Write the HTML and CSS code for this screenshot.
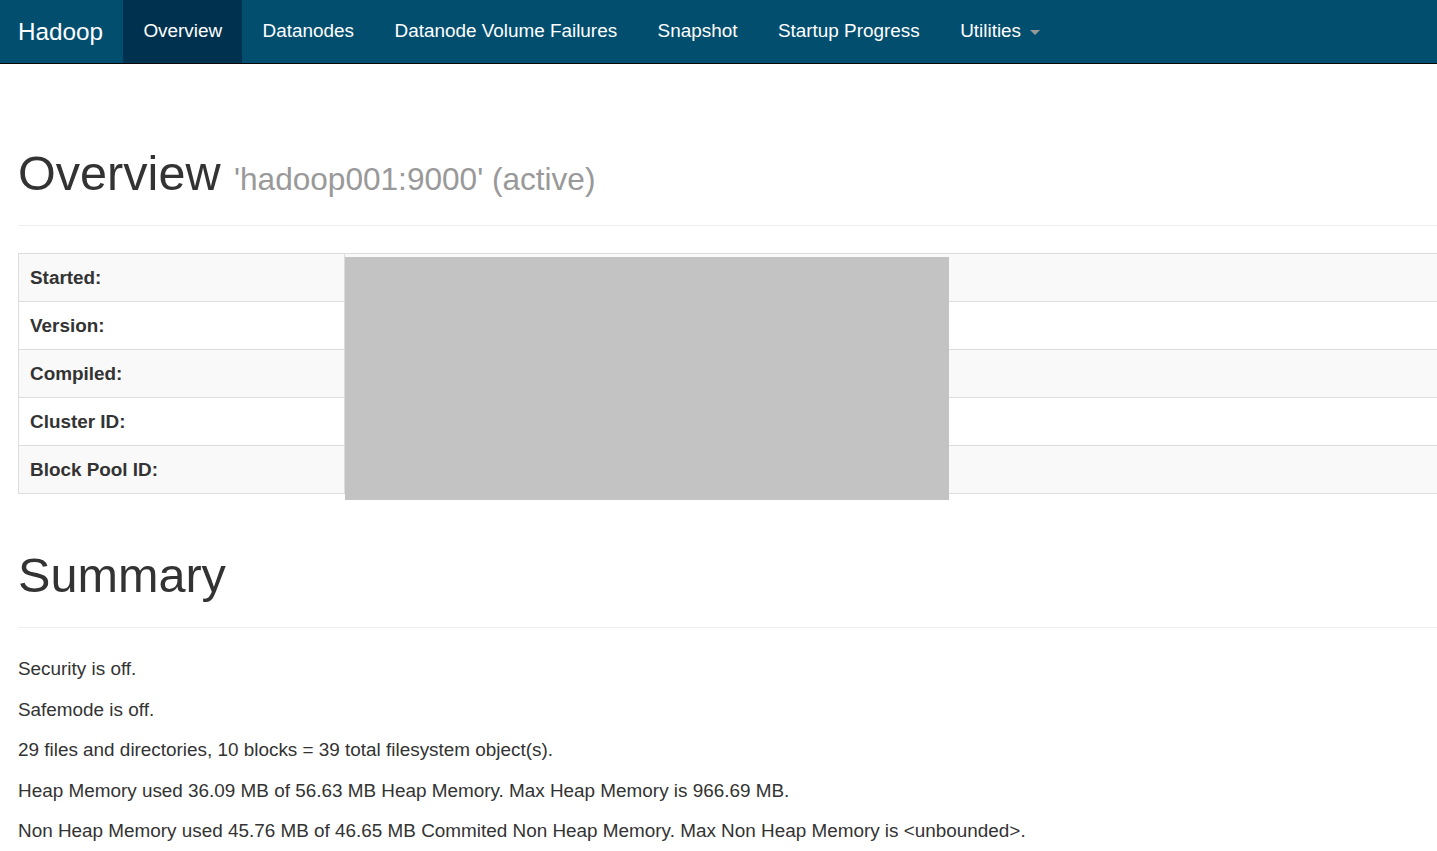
FILE: index.html
```html
<!DOCTYPE html>
<html lang="en">
<head>
<meta charset="utf-8">
<title>Namenode information</title>
<link rel="stylesheet" href="styles.css">
</head>
<body>
<nav class="navbar">
  <a class="brand" href="#">Hadoop</a>
  <ul class="nav">
    <li class="active"><a href="#">Overview</a></li>
    <li><a href="#">Datanodes</a></li>
    <li><a href="#">Datanode Volume Failures</a></li>
    <li><a href="#">Snapshot</a></li>
    <li><a href="#">Startup Progress</a></li>
    <li><a href="#">Utilities <span class="caret"></span></a></li>
  </ul>
</nav>
<div class="container">
  <div class="page-header page-header-first">
    <h1>Overview <small>'hadoop001:9000' (active)</small></h1>
  </div>
  <div class="table-wrap">
    <table class="info">
      <tr><th>Started:</th><td></td></tr>
      <tr><th>Version:</th><td></td></tr>
      <tr><th>Compiled:</th><td></td></tr>
      <tr><th>Cluster ID:</th><td></td></tr>
      <tr><th>Block Pool ID:</th><td></td></tr>
    </table>
    <div class="redact"></div>
  </div>
  <div class="page-header">
    <h1>Summary</h1>
  </div>
  <p>Security is off.</p>
  <p>Safemode is off.</p>
  <p>29 files and directories, 10 blocks = 39 total filesystem object(s).</p>
  <p>Heap Memory used 36.09 MB of 56.63 MB Heap Memory. Max Heap Memory is 966.69 MB.</p>
  <p>Non Heap Memory used 45.76 MB of 46.65 MB Commited Non Heap Memory. Max Non Heap Memory is &lt;unbounded&gt;.</p>
</div>
</body>
</html>
```
FILE: styles.css
```css
html, body {
  margin: 0;
  padding: 0;
}
body {
  font-family: "Liberation Sans", Arial, Helvetica, sans-serif;
  font-size: 18.9px;
  line-height: 27px;
  color: #333;
  background: #fff;
  overflow-x: hidden;
}
.navbar {
  display: flex;
  align-items: stretch;
  height: 63px;
  background: #024e6f;
  border-bottom: 1px solid #0a0a0a;
}
.brand {
  display: block;
  padding: 0 20px 0 18px;
  font-size: 24.3px;
  line-height: 63px;
  color: #fff;
  text-decoration: none;
}
.nav {
  display: flex;
  margin: 0;
  padding: 0;
  list-style: none;
}
.nav li a {
  display: block;
  padding: 0 20.25px;
  line-height: 62px;
  height: 63px;
  color: #fff;
  text-decoration: none;
  font-size: 18.9px;
}
.nav li.active a {
  background: #00324f;
}
.caret {
  display: inline-block;
  width: 0;
  height: 0;
  margin-left: 4px;
  vertical-align: middle;
  border-top: 5.4px solid #999;
  border-left: 5.4px solid transparent;
  border-right: 5.4px solid transparent;
}
.container {
  width: 1580px;
  padding: 0 18px;
}
.page-header {
  margin: 83px 0 27px;
  padding-bottom: 12px;
  border-bottom: 1px solid #eee;
}
.page-header-first {
  padding-bottom: 6px;
}
.table-wrap + .page-header {
  margin-top: 55px;
}
h1 {
  margin: 0 0 13.3px;
  font-size: 48.6px;
  font-weight: 500;
  line-height: 52.8px;
  color: #333;
}
h1 small {
  font-size: 65%;
  font-weight: normal;
  color: #999;
}
.table-wrap {
  position: relative;
}
.info {
  width: 100%;
  border-collapse: collapse;
  border: 1px solid #ddd;
}
.info th,
.info td {
  padding: 10px 11px;
  height: 27px;
  border: 1px solid #ddd;
  text-align: left;
  vertical-align: middle;
}
.info th {
  width: 303px;
  font-weight: bold;
}
.info tr:nth-child(odd) {
  background: #f9f9f9;
}
.redact {
  position: absolute;
  left: 327px;
  top: 4px;
  width: 604px;
  height: 243px;
  background: #c3c3c3;
}
p {
  margin: 0 0 13.5px;
}
```
